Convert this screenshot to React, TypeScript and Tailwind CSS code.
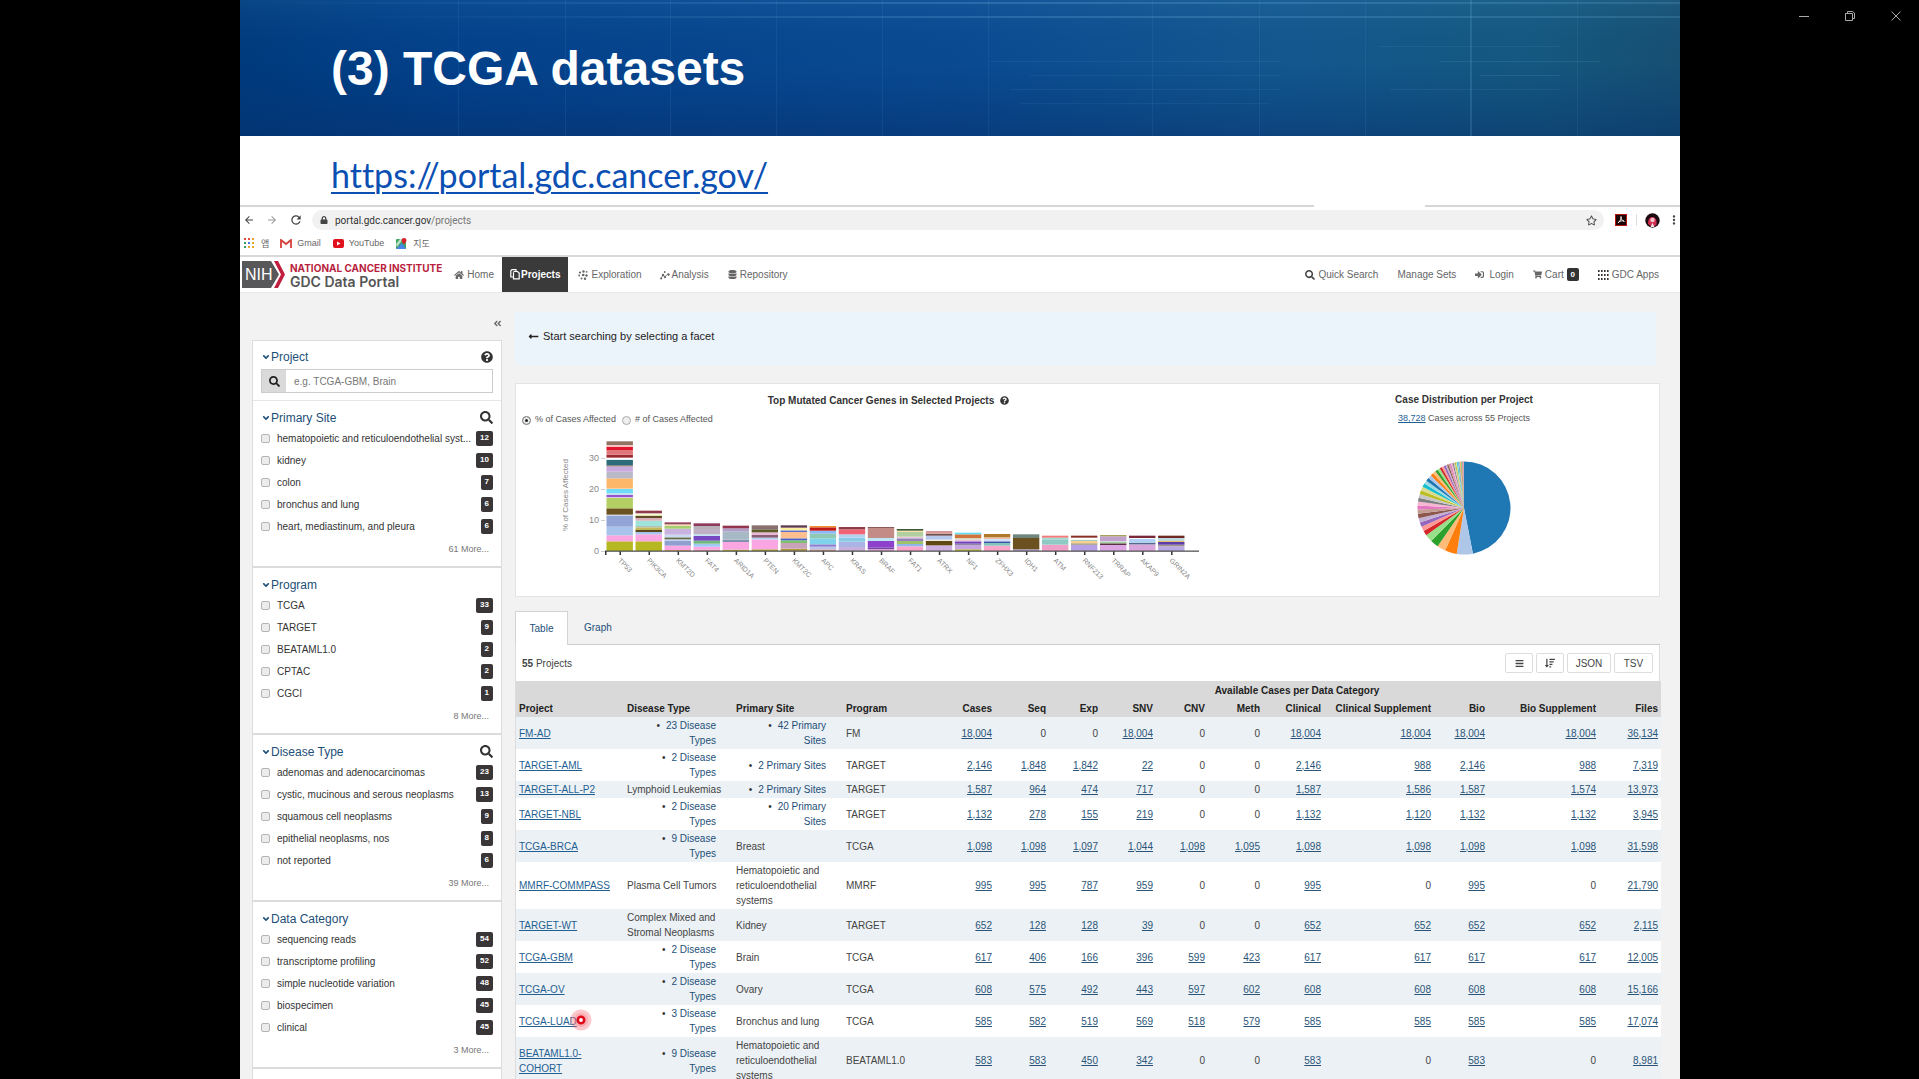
import React, { useState } from "react";
import {
  FaAngleDoubleLeft,
  FaAngleDown,
  FaBars,
  FaDatabase,
  FaHome,
  FaLock,
  FaQuestionCircle,
  FaSearch,
  FaShoppingCart,
  FaSignInAlt,
  FaSortAmountDown,
  FaLongArrowAltLeft,
  FaRegStar,
} from "react-icons/fa";
import { MdArrowBack, MdArrowForward, MdRefresh, MdMoreVert } from "react-icons/md";
import clsx from "clsx";

type FacetItem = [name: string, count: number];

interface Facet {
  title: string;
  searchable: boolean;
  items: FacetItem[];
  more: number;
}

interface ProjectRow {
  id: string;
  disease: string | number;
  site: string | number;
  program: string;
  // cases, seq, exp, snv, cnv, meth, clinical, clinical supp, bio, bio supp, files
  counts: number[];
}

const FACETS: Facet[] = [
  {
    title: "Primary Site",
    searchable: true,
    items: [
      ["hematopoietic and reticuloendothelial syst...", 12],
      ["kidney", 10],
      ["colon", 7],
      ["bronchus and lung", 6],
      ["heart, mediastinum, and pleura", 6],
    ],
    more: 61,
  },
  {
    title: "Program",
    searchable: false,
    items: [["TCGA", 33], ["TARGET", 9], ["BEATAML1.0", 2], ["CPTAC", 2], ["CGCI", 1]],
    more: 8,
  },
  {
    title: "Disease Type",
    searchable: true,
    items: [
      ["adenomas and adenocarcinomas", 23],
      ["cystic, mucinous and serous neoplasms", 13],
      ["squamous cell neoplasms", 9],
      ["epithelial neoplasms, nos", 8],
      ["not reported", 6],
    ],
    more: 39,
  },
  {
    title: "Data Category",
    searchable: false,
    items: [
      ["sequencing reads", 54],
      ["transcriptome profiling", 52],
      ["simple nucleotide variation", 48],
      ["biospecimen", 45],
      ["clinical", 45],
    ],
    more: 3,
  },
];

const HEMATO = "Hematopoietic and reticuloendothelial systems";

const PROJECTS: ProjectRow[] = [
  { id: "FM-AD", disease: 23, site: 42, program: "FM", counts: [18004, 0, 0, 18004, 0, 0, 18004, 18004, 18004, 18004, 36134] },
  { id: "TARGET-AML", disease: 2, site: 2, program: "TARGET", counts: [2146, 1848, 1842, 22, 0, 0, 2146, 988, 2146, 988, 7319] },
  { id: "TARGET-ALL-P2", disease: "Lymphoid Leukemias", site: 2, program: "TARGET", counts: [1587, 964, 474, 717, 0, 0, 1587, 1586, 1587, 1574, 13973] },
  { id: "TARGET-NBL", disease: 2, site: 20, program: "TARGET", counts: [1132, 278, 155, 219, 0, 0, 1132, 1120, 1132, 1132, 3945] },
  { id: "TCGA-BRCA", disease: 9, site: "Breast", program: "TCGA", counts: [1098, 1098, 1097, 1044, 1098, 1095, 1098, 1098, 1098, 1098, 31598] },
  { id: "MMRF-COMMPASS", disease: "Plasma Cell Tumors", site: HEMATO, program: "MMRF", counts: [995, 995, 787, 959, 0, 0, 995, 0, 995, 0, 21790] },
  { id: "TARGET-WT", disease: "Complex Mixed and Stromal Neoplasms", site: "Kidney", program: "TARGET", counts: [652, 128, 128, 39, 0, 0, 652, 652, 652, 652, 2115] },
  { id: "TCGA-GBM", disease: 2, site: "Brain", program: "TCGA", counts: [617, 406, 166, 396, 599, 423, 617, 617, 617, 617, 12005] },
  { id: "TCGA-OV", disease: 2, site: "Ovary", program: "TCGA", counts: [608, 575, 492, 443, 597, 602, 608, 608, 608, 608, 15166] },
  { id: "TCGA-LUAD", disease: 3, site: "Bronchus and lung", program: "TCGA", counts: [585, 582, 519, 569, 518, 579, 585, 585, 585, 585, 17074] },
  { id: "BEATAML1.0-COHORT", disease: 9, site: HEMATO, program: "BEATAML1.0", counts: [583, 583, 450, 342, 0, 0, 583, 0, 583, 0, 8981] },
];

// Stacks are listed bottom to top, "colour height" in units of a third of a pixel
const GENES: { name: string; stack: string }[] = [
  { name: "TP53", stack: "b5b821 29,f9a6e2 18,a9c4ec 26,93a5d6 34,ffffff 2,6b5020 19,b3cf63 31,ffffff 2,9455cc 8,c9e8fa 4,6fdcf5 13,ffffff 1,fdb76a 31,b9b9c8 20,c9aade 16,8a6a50 3,2d6d7b 17,ffffff 6,9c2a30 9,e0767c 14,e1142b 9,f9c0c0 6,8f7462 11" },
  { name: "PIK3CA", stack: "b5b821 29,f9a6e2 21,a9c4ec 7,5a4720 6,c2b95a 8,b0c3b8 4,9fe3da 16,d9b0b8 8,5f4a2a 7,e8f3a0 4,ffffff 3,8f3a48 8" },
  { name: "KMT2D", stack: "e8a26a 3,f9a6e2 13,8f9fd0 15,b5cfee 4,6b6a48 6,c9daf5 8,c8b2e0 18,a5cf70 8,f3dcb0 5,93455c 6" },
  { name: "FAT4", stack: "e58f9a 4,f9a6e2 9,9fc9f5 9,6fb97a 9,7648c0 14,bfe6f5 5,c0b0c4 16,b7b0b8 9,8f3a5c 8" },
  { name: "ARID1A", stack: "b5b821 4,f9a6e2 23,7f93b0 7,a8b9c6 24,b0a0c8 10,93354c 8" },
  { name: "PTEN", stack: "a5a821 5,f9a6e2 30,a9d4f5 5,8a6078 8,eab8d4 8,5c5c28 9,8a7070 12" },
  { name: "KMT2C", stack: "b59a41 7,c8a2b8 17,7fc06a 8,4560c8 6,fbbf90 19,5a70d0 5,fcf0a0 7,ffffff 1,5e3a4c 7" },
  { name: "APC", stack: "d79a91 5,b9c4ec 8,8f7ccf 7,7fd3ea 18,8fc9b4 14,8cb8f5 9,c01818 10,f0902f 4" },
  { name: "KRAS", stack: "c8b0dc 12,a9b4e4 16,88cbe4 12,b4d2f0 10,f06474 15,8e3c48 7" },
  { name: "BRAF", stack: "e2a0d8 6,6a4a9c 4,8c40cc 20,bce8f5 9,c48c86 30,8d5a58 3" },
  { name: "FAT1", stack: "fba6ca 14,93b4ec 7,a0c36a 9,9480bc 8,e8c8d8 5,b2cfa2 14,f8e3a0 4,3f5a3a 5" },
  { name: "ATRX", stack: "cfb0e2 17,5f4812 14,ffffff 3,b8c8ea 12,705050 6,d89a98 8" },
  { name: "NF1", stack: "b5b821 5,c7a5e0 13,8f8ca0 4,7040b8 7,e5c8dc 6,d9d5b8 4,d0743c 11,60e0f5 5" },
  { name: "ZFHX3", stack: "fba6ca 16,80c4bc 8,3f50a8 5,cfe0fa 7,f3c0a8 5,b07a2c 10" },
  { name: "IDH1", stack: "b9a0e0 5,6b5020 34,70857c 11" },
  { name: "ATM", stack: "f0a0c8 19,8fc9c4 16,a0d8d4 5,f07c78 6" },
  { name: "RNF213", stack: "b8a0e4 19,8f8f70 4,fbcf90 7,9fd0c8 4,ffffff 6,8a2f28 6" },
  { name: "TRRAP", stack: "dba6e2 18,5a3048 5,a2d09a 5,ffffff 1,c0a0cc 15,a8a05c 4" },
  { name: "AKAP9", stack: "d8a6dc 20,506c88 5,b0d0f5 12,ffffff 2,782838 7" },
  { name: "GRIN2A", stack: "b8a8e4 14,a09088 5,5c3cac 8,e8c060 3,bcd8e0 9,702820 7" },
];

const PIE_VALUES = [
  18004, 2146, 1587, 1132, 1098, 995, 652, 617, 608, 585, 583, 560, 537, 528, 516, 507, 504, 500,
  489, 470, 461, 443, 412, 383, 377, 323, 307, 291, 261, 200, 200, 185, 185, 179, 172, 150, 143,
  124, 113, 101, 92, 87, 80, 75, 70, 58, 57, 51, 45, 36, 30, 24, 15, 13, 7,
];

const CATEGORY20 = [
  "#1f77b4", "#aec7e8", "#ff7f0e", "#ffbb78", "#2ca02c", "#98df8a", "#d62728", "#ff9896", "#9467bd", "#c5b0d5",
  "#8c564b", "#c49c94", "#e377c2", "#f7b6d2", "#7f7f7f", "#c7c7c7", "#bcbd22", "#dbdb8d", "#17becf", "#9edae5",
];

const COLUMN_WIDTHS = [
  "w-[108px]", "w-[109px]", "w-[110px]", "w-[112px]", "w-[40px]", "w-[54px]", "w-[52px]", "w-[55px]",
  "w-[52px]", "w-[55px]", "w-[61px]", "w-[110px]", "w-[54px]", "w-[111px]", "w-[62px]",
];

const COUNT_HEADERS = ["Cases", "Seq", "Exp", "SNV", "CNV", "Meth", "Clinical", "Clinical Supplement", "Bio", "Bio Supplement", "Files"];

/* ---------- Slide banner ---------- */

const SlideBanner = () => (
  <header className="relative flex h-[136px] shrink-0 items-center overflow-hidden bg-[#03418c] pt-[2px] pl-[91px]">
    <svg className="absolute inset-0 h-full w-full" viewBox="0 0 1440 136" preserveAspectRatio="none" aria-hidden="true">
      <defs>
        <linearGradient id="banner" x1="0" x2="1" y1="0" y2="0">
          <stop offset="0" stopColor="#003b7d" />
          <stop offset="0.15" stopColor="#03418b" />
          <stop offset="0.5" stopColor="#0a4a91" />
          <stop offset="0.72" stopColor="#13578f" />
          <stop offset="0.9" stopColor="#15587f" />
          <stop offset="1" stopColor="#164f72" />
        </linearGradient>
        <linearGradient id="shade" x1="0" x2="0" y1="0" y2="1">
          <stop offset="0" stopColor="#5fb0dd" stopOpacity="0.1" />
          <stop offset="0.45" stopColor="#003070" stopOpacity="0" />
          <stop offset="1" stopColor="#052c66" stopOpacity="0.45" />
        </linearGradient>
        <linearGradient id="fade" x1="0" x2="1" y1="0" y2="0">
          <stop offset="0" stopColor="#6fb4e0" stopOpacity="0" />
          <stop offset="0.5" stopColor="#6fb4e0" stopOpacity="0.25" />
          <stop offset="1" stopColor="#6fb4e0" stopOpacity="0.2" />
        </linearGradient>
      </defs>
      <rect width="1440" height="136" fill="url(#banner)" />
      <rect width="1440" height="136" fill="url(#shade)" />
      <rect y="2" width="1440" height="2" fill="url(#fade)" />
      <rect x="100" y="16" width="1340" height="2" fill="url(#fade)" />
      <g fill="#6fb4e0">
        {[218, 325, 430, 536, 642, 748, 912, 1019, 1125, 1337].map((x) => (
          <rect key={x} x={x} width="1" height="136" opacity="0.1" />
        ))}
        <rect x="1230" width="2" height="136" opacity="0.2" />
        <rect x="750" y="61" width="290" height="1" opacity="0.1" />
        <rect x="790" y="75" width="250" height="1" opacity="0.08" />
        <rect x="770" y="89" width="270" height="1" opacity="0.1" />
        <rect x="780" y="103" width="250" height="1" opacity="0.08" />
        <rect x="1140" y="46" width="180" height="1" opacity="0.12" />
        <rect x="1200" y="61" width="160" height="1" opacity="0.14" />
        <rect x="1240" y="75" width="80" height="1" opacity="0.16" />
        <rect x="1150" y="89" width="170" height="1" opacity="0.12" />
      </g>
    </svg>
    <h1 className="relative text-5xl font-bold text-white">(3) TCGA datasets</h1>
  </header>
);

/* ---------- Browser chrome ---------- */

const BrowserBar = () => (
  <div className="shrink-0 bg-white text-[#444]">
    <div className="flex h-[2px]">
      <div className="flex-1 bg-[#d6d6d6]" />
      <div className="w-[111px]" />
      <div className="w-[255px] bg-[#d6d6d6]" />
    </div>
    <div className="flex h-[26px] items-center pl-[3px]">
      <button aria-label="Back"><MdArrowBack className="h-3 w-3" /></button>
      <button aria-label="Forward" className="ml-[11px] text-[#999]"><MdArrowForward className="h-3 w-3" /></button>
      <button aria-label="Reload" className="ml-[11px]"><MdRefresh className="h-[14px] w-[14px]" /></button>
      <div className="ml-[9px] flex h-5 flex-1 items-center rounded-full bg-[#f1f1f1] pr-[7px] pl-[8px]">
        <FaLock className="h-[8px] w-[8px]" />
        <span className="ml-[7px] font-[Roboto,sans-serif] text-[10px] text-[#333]">
          portal.gdc.cancer.gov<span className="text-[#777]">/projects</span>
        </span>
        <FaRegStar className="ml-auto h-[11px] w-[11px]" />
      </div>
      <svg className="ml-[11px] h-3 w-3" viewBox="0 0 12 12" aria-hidden="true">
        <rect x="0.5" y="0.5" width="11" height="11" fill="#1c0505" stroke="#b51212" />
        <path d="M6 2.500c.6 2-1 5-3 6.500M6 2.500c-.5 2 1 4 3.500 5M3.500 8c2-1.200 3.500-1.400 5.500-1" fill="none" stroke="#fff" strokeWidth="0.9" />
      </svg>
      <div className="ml-[9px] h-3 w-px bg-[#ddd]" />
      <svg className="ml-[8px] h-[15px] w-[15px]" viewBox="0 0 15 15" aria-hidden="true">
        <circle cx="7.500" cy="7.500" r="7.200" fill="#1c0a12" />
        <path d="M3 11c0-5 1.500-7 4.500-7s4.500 3 4 8l-4 2z" fill="#d02f52" />
        <circle cx="7.500" cy="7" r="2.200" fill="#f6c3cc" />
        <path d="M5.500 14l2-4 2 4z" fill="#f4e4ea" />
      </svg>
      <button aria-label="Menu" className="ml-[8px] flex w-3 justify-center"><MdMoreVert className="h-[14px] w-[14px] shrink-0" /></button>
    </div>
    <nav className="flex h-[22px] items-center pb-[2px] pl-1 text-[9px] leading-none text-[#666]">
      <svg className="h-[10px] w-[10px]" viewBox="0 0 10 10" aria-hidden="true">
        {["#e04b3c", "#e04b3c", "#e9a82c", "#3b9d5a", "#3f7be0", "#e9a82c", "#3b9d5a", "#e9a82c", "#e9a82c"].map((c, i) => (
          <rect key={i} x={(i % 3) * 4} y={Math.floor(i / 3) * 4} width="2" height="2" fill={c} />
        ))}
      </svg>
      <a href="#apps" className="ml-[7px] font-['Noto_Sans_CJK_KR',sans-serif]">앱</a>
      <a href="#gmail" className="ml-[11px] flex items-center gap-[5px]">
        <svg className="h-[9px] w-3" viewBox="0 0 12 9" aria-hidden="true">
          <path d="M1 9V1l5 4 5-4v8" fill="none" stroke="#d6403a" strokeWidth="1.800" />
        </svg>
        Gmail
      </a>
      <a href="#youtube" className="ml-[12px] flex items-center gap-[5px]">
        <svg className="h-[9px] w-[11px]" viewBox="0 0 11 9" aria-hidden="true">
          <rect width="11" height="9" rx="2" fill="#e0101c" />
          <path d="M4 2.500v4l3.500-2z" fill="#fff" />
        </svg>
        YouTube
      </a>
      <a href="#maps" className="ml-[12px] flex items-center gap-[6px] font-['Noto_Sans_CJK_KR',sans-serif]">
        <svg className="h-[11px] w-[11px]" viewBox="0 0 11 11" aria-hidden="true">
          <rect y="1" width="10" height="10" rx="1" fill="#3aa35c" />
          <path d="M0 11l6-6 4 6z" fill="#4a86e8" />
          <path d="M0 6l4-5h3L1 9z" fill="#bfe0c8" />
          <path d="M8 6.500C6 4 5.500 3.500 5.500 2.300a2.500 2.300 0 0 1 5 0C10.500 3.500 10 4 8 6.500z" fill="#d8232f" />
        </svg>
        지도
      </a>
    </nav>
  </div>
);

/* ---------- Portal header ---------- */

const NihLogo = () => (
  <svg className="h-[27px] w-[43px]" viewBox="0 0 43 27" role="img" aria-label="NIH">
    <path d="M0 0h29l8 13.500-8 13.500H0z" fill="#58585b" />
    <path d="M32 0h4l7 13.500-7 13.500h-4l7-13.500z" fill="#c01f3f" />
    <text x="3" y="19" fontSize="16" fill="#fff" fontFamily="Liberation Sans, sans-serif">NIH</text>
  </svg>
);

const ProjectsIcon = () => (
  <svg className="h-[11px] w-[10px]" viewBox="0 0 10 11" aria-hidden="true" fill="none" stroke="currentColor" strokeWidth="1.200">
    <path d="M3.500 3.200V9.800h5.700V4L7.500 2.500H3.500" />
    <path d="M3.500 8H.8V1.700L2 .7h4v1.600" />
  </svg>
);

const ExplorationIcon = () => (
  <svg className="h-[10px] w-[10px]" viewBox="0 0 10 10" aria-hidden="true" fill="currentColor">
    <circle cx="2" cy="2.500" r="1.100" />
    <circle cx="5.500" cy="1.500" r="1.200" />
    <circle cx="8.700" cy="1.800" r="0.900" />
    <circle cx="1.200" cy="5.500" r="0.900" />
    <circle cx="5.200" cy="5" r="1.300" />
    <circle cx="8.500" cy="5.500" r="1.200" />
    <circle cx="3.500" cy="8.500" r="1" />
    <circle cx="7" cy="8.700" r="1.200" />
  </svg>
);

const AnalysisIcon = () => (
  <svg className="h-[10px] w-[10px]" viewBox="0 0 10 10" aria-hidden="true" fill="currentColor">
    <path d="M.5 8.500L3 5.500l2 1 3-2.500" fill="none" stroke="currentColor" strokeWidth="0.800" />
    <circle cx="3" cy="5" r="1.200" />
    <circle cx="5" cy="7.200" r="1.100" />
    <circle cx="8.500" cy="4.500" r="1.200" />
    <circle cx="4.700" cy="2" r="0.900" />
    <circle cx="1.200" cy="8.500" r="1" />
  </svg>
);

const PortalHeader = () => (
  <header className="flex h-[38px] shrink-0 items-center border-t-2 border-b border-t-[#d9d9d9] border-b-[#e7e7e7] bg-white pl-[2px] text-[10px] text-[#666]">
    <NihLogo />
    <div className="ml-[5px] font-[Inter,sans-serif] leading-[13px]">
      <div className="text-[10px] font-bold text-[#b81f3e]">NATIONAL CANCER INSTITUTE</div>
      <div className="text-sm leading-[13px] font-semibold text-[#555]">GDC Data Portal</div>
    </div>
    <nav className="ml-3 flex items-center self-stretch">
      <a href="#home" className="flex items-center gap-[3px] pr-[8px]"><FaHome className="h-[10px] w-[10px]" />Home</a>
      <a href="#projects" className="flex h-full items-center gap-px bg-[#3a3a3a] px-[8px] font-bold text-white"><ProjectsIcon />Projects</a>
      <a href="#exploration" className="ml-[10px] flex items-center gap-[3px]"><ExplorationIcon />Exploration</a>
      <a href="#analysis" className="ml-[18px] flex items-center gap-[2px]"><AnalysisIcon />Analysis</a>
      <a href="#repository" className="ml-[19px] flex items-center gap-[3px]"><FaDatabase className="h-[9px] w-[9px]" />Repository</a>
    </nav>
    <nav className="ml-auto flex items-center gap-[19px] pr-[21px]">
      <button className="flex items-center gap-[3px]"><FaSearch className="h-[10px] w-[10px] text-[#444]" />Quick Search</button>
      <a href="#sets">Manage Sets</a>
      <button className="flex items-center gap-[5px]"><FaSignInAlt className="h-[9px] w-[9px]" />Login</button>
      <a href="#cart" className="flex items-center gap-[3px]">
        <FaShoppingCart className="h-[9px] w-[9px]" />
        Cart
        <span className="flex h-[13px] w-3 items-center justify-center rounded-xs bg-[#333] text-[8px] font-bold text-white">0</span>
      </a>
      <button className="flex items-center gap-[3px]">
        <svg className="h-[10px] w-[11px]" viewBox="0 0 11 10" aria-hidden="true" fill="#333">
          {[0, 1, 2].map((r) => [0, 1, 2, 3].map((c) => <rect key={`${r}${c}`} x={c * 3} y={r * 4} width="1.600" height="2" />))}
        </svg>
        GDC Apps
      </button>
    </nav>
  </header>
);

/* ---------- Facet sidebar ---------- */

const FacetTitle = ({ title }: { title: string }) => (
  <h2 className="flex items-center text-xs text-[#1d4f78]">
    <FaAngleDown className="h-[10px] w-[10px]" />
    {title}
  </h2>
);

const FacetSection = ({ facet }: { facet: Facet }) => (
  <section className="h-[167px] border-b-2 border-[#dcdcdc] pt-[7px] pr-[8px] pl-[8px]">
    <div className="flex h-[19px] items-center justify-between">
      <FacetTitle title={facet.title} />
      {facet.searchable && (
        <button aria-label={`Search ${facet.title}`}><FaSearch className="h-[13px] w-[13px] text-[#333]" /></button>
      )}
    </div>
    <ul>
      {facet.items.map(([name, count]) => (
        <li key={name} className="flex h-[22px] items-center justify-between">
          <label className="flex items-center gap-[7px] text-[10px] whitespace-nowrap text-[#333]">
            <input type="checkbox" className="h-[9px] w-[9px] shrink-0 appearance-none rounded-xs border border-[#b5b5b5] bg-[#ececec]" />
            {name}
          </label>
          <span className="flex h-[15px] items-center justify-center rounded-xs bg-[#3a3536] px-1 text-[8px] leading-none font-bold text-white">
            {count}
          </span>
        </li>
      ))}
    </ul>
    <div className="flex h-[26px] items-center justify-end pr-1">
      <button className="text-[9px] text-[#777]">{facet.more} More...</button>
    </div>
  </section>
);

const Sidebar = () => (
  <aside className="w-[262px] shrink-0 pl-3">
    <div className="flex h-[47px] items-end justify-end pb-[12px]">
      <button aria-label="Collapse facets"><FaAngleDoubleLeft className="h-[9px] w-[9px] text-[#666]" /></button>
    </div>
    <div className="border border-[#dcdcdc] bg-white">
      <section className="h-[60px] border-b border-[#e6e6e6] px-2 pt-[6px]">
        <div className="flex h-5 items-center justify-between">
          <FacetTitle title="Project" />
          <FaQuestionCircle className="h-3 w-3 text-[#333]" />
        </div>
        <div className="mt-[2px] flex h-6 border border-[#ccc]">
          <span className="flex w-6 items-center justify-center bg-[#dadada]"><FaSearch className="h-[11px] w-[11px] text-[#222]" /></span>
          <input
            type="text"
            aria-label="Project"
            placeholder="e.g. TCGA-GBM, Brain"
            className="min-w-0 flex-1 px-2 text-[10px] placeholder:text-[#777]"
          />
        </div>
      </section>
      {FACETS.map((facet) => (
        <FacetSection key={facet.title} facet={facet} />
      ))}
      <div className="h-10" />
    </div>
  </aside>
);

/* ---------- Charts ---------- */

const GeneChart = () => {
  const baseline = 119;
  return (
    <svg className="h-[160px] w-[700px]" viewBox="0 0 700 160" role="img" aria-label="Top mutated cancer genes" fontFamily="Liberation Sans, sans-serif">
      <text x="50" y="63" fontSize="8" fill="#888" textAnchor="middle" dominantBaseline="middle" transform="rotate(-90 50 63)">
        % of Cases Affected
      </text>
      {[0, 10, 20, 30].map((t) => (
        <g key={t}>
          <text x="83" y={baseline - t * 3.1 + 3} fontSize="9" fill="#888" textAnchor="end">{t}</text>
          <rect x="85" y={Math.round(baseline - t * 3.1)} width="4" height="1" fill="#ccc" />
        </g>
      ))}
      {GENES.map((gene, i) => {
        const x = 90.5 + i * 29.03;
        let y = baseline;
        return (
          <g key={gene.name}>
            {gene.stack.split(",").map((part, j) => {
              const [color, size] = part.split(" ");
              const h = Number(size) / 3;
              y -= h;
              return <rect key={j} x={x} y={y} width="26.400" height={h} fill={`#${color}`} />;
            })}
            <rect x={x + 13} y={baseline} width="1.500" height="4" fill="#333" />
            <text fontSize="7" fill="#888" transform={`translate(${x + 11} 129) rotate(45)`}>{gene.name}</text>
          </g>
        );
      })}
      <rect x="89" y={baseline - 0.5} width="594" height="1.300" fill="#555" />
      <rect x="89" y={baseline} width="1.500" height="4" fill="#333" />
    </svg>
  );
};

const CasePie = () => {
  const total = PIE_VALUES.reduce((a, b) => a + b, 0);
  let start = 0;
  return (
    <svg className="h-[94px] w-[94px]" viewBox="-47 -47 94 94" role="img" aria-label="Case distribution per project">
      {PIE_VALUES.map((value, i) => {
        const a0 = start;
        start += (value / total) * Math.PI * 2;
        const x0 = Math.sin(a0) * 46.5;
        const y0 = -Math.cos(a0) * 46.5;
        const x1 = Math.sin(start) * 46.5;
        const y1 = -Math.cos(start) * 46.5;
        return <path key={i} d={`M0 0L${x0} ${y0}A46.5 46.5 0 0 1 ${x1} ${y1}Z`} fill={CATEGORY20[i % 20]} />;
      })}
    </svg>
  );
};

const ChartsPanel = () => {
  const [mode, setMode] = useState("percent");
  const options = [
    { value: "percent", label: "% of Cases Affected" },
    { value: "count", label: "# of Cases Affected" },
  ];

  return (
    <section className="mt-[18px] flex h-[214px] border border-[#e4e4e4] bg-white text-[#333]">
      <div className="min-w-0 flex-1">
        <h3 className="flex h-8 items-center justify-center gap-[6px] pr-2 text-[10px] font-bold">
          Top Mutated Cancer Genes in Selected Projects
          <FaQuestionCircle className="h-[9px] w-[9px]" />
        </h3>
        <div className="flex h-4 gap-[6px] pl-[6px]">
          {options.map((o) => (
            <label key={o.value} className="flex h-2 items-center gap-1 text-[9px] text-[#555]">
              <input
                type="radio"
                name="mode"
                checked={mode === o.value}
                onChange={() => setMode(o.value)}
                className="h-[9px] w-[9px] appearance-none rounded-full border border-[#aaa] bg-[#eee] checked:border-[#999] checked:bg-[#222] checked:shadow-[inset_0_0_0_2px_#eee]"
              />
              {o.label}
            </label>
          ))}
        </div>
        <GeneChart />
      </div>
      <div className="flex w-[390px] flex-col items-center">
        <h3 className="flex h-[30px] items-center text-[10px] font-bold">Case Distribution per Project</h3>
        <p className="text-[9px] leading-none text-[#555]">
          <a href="#cases" className="text-[#1f5f92] underline">38,728</a> Cases across 55 Projects
        </p>
        <div className="mt-[38px]"><CasePie /></div>
      </div>
    </section>
  );
};

/* ---------- Projects table ---------- */

const SummaryCell = ({ value, plural }: { value: string | number; plural: string }) => {
  if (typeof value === "string") {
    return <td className="px-[3px] py-px">{value}</td>;
  }
  return (
    <td className="py-px pr-[17px] pl-3 text-right">
      <ul>
        <li className="text-[#1d4f78]">
          <span className="mr-[6px] text-[#333]">•</span>
          {value} {plural}
        </li>
      </ul>
    </td>
  );
};

// Laser pointer dot
const Pointer = () => (
  <svg className="absolute -top-2 -right-4 h-6 w-6" viewBox="0 0 24 24" aria-hidden="true">
    <circle cx="12" cy="12" r="10.500" fill="#f3606a" opacity="0.35" />
    <circle cx="12" cy="12" r="7" fill="#f3606a" opacity="0.25" />
    <circle cx="12" cy="12" r="3.200" fill="#fff" stroke="#e00a18" strokeWidth="2.600" />
  </svg>
);

const ProjectsTable = () => (
  <table className="w-full table-fixed text-left text-[10px] leading-[15px] text-[#444]">
    <colgroup>
      {COLUMN_WIDTHS.map((w, i) => (
        <col key={i} className={w} />
      ))}
    </colgroup>
    <thead className="bg-[#d9d9d9] text-[#222]">
      <tr className="h-[18px]">
        <th colSpan={5} />
        <th colSpan={9} className="text-center">Available Cases per Data Category</th>
        <th />
      </tr>
      <tr className="h-[18px]">
        {["Project", "Disease Type", "Primary Site", "Program"].map((h) => (
          <th key={h} className="px-[3px]">{h}</th>
        ))}
        {COUNT_HEADERS.map((h) => (
          <th key={h} className="pr-[3px] text-right whitespace-nowrap">{h}</th>
        ))}
      </tr>
    </thead>
    <tbody>
      {PROJECTS.map((p, i) => (
        <tr key={p.id} className={clsx(i % 2 === 0 ? "bg-[#ecf1f5]" : "bg-white")}>
          <td className="px-[3px] py-px">
            <span className="relative">
              <a href={`#${p.id}`} className="text-[#1f5f92] underline">{p.id}</a>
              {p.id === "TCGA-LUAD" && <Pointer />}
            </span>
          </td>
          <SummaryCell value={p.disease} plural="Disease Types" />
          <SummaryCell value={p.site} plural="Primary Sites" />
          <td className="px-[3px] py-px">{p.program}</td>
          {p.counts.map((n, j) => (
            <td key={j} className="py-px pr-[3px] text-right">
              {n === 0 ? "0" : <a href={`#${p.id}`} className="text-[#2a5578] underline">{n.toLocaleString("en-US")}</a>}
            </td>
          ))}
        </tr>
      ))}
    </tbody>
  </table>
);

const TOOL_BUTTON = "flex h-5 items-center justify-center rounded-xs border border-[#ddd] bg-white";

const ProjectsPanel = () => (
  <section className="mt-[14px]">
    <div role="tablist" className="flex h-[34px] border-b border-[#ccc] text-[10px] text-[#1d4f78]">
      <button role="tab" aria-selected="true" className="-mb-px w-[53px] border border-b-0 border-[#d4d4d4] bg-white">Table</button>
      <button role="tab" aria-selected="false" className="px-4">Graph</button>
    </div>
    <div className="border-x border-[#dcdcdc] bg-white">
      <div className="flex h-9 items-center pr-[6px] pl-[6px] text-[10px] text-[#444]">
        <span><b>55</b> Projects</span>
        <div className="ml-auto flex gap-[3px]">
          <button aria-label="Columns" className={clsx(TOOL_BUTTON, "w-7")}><FaBars className="h-[9px] w-[9px]" /></button>
          <button aria-label="Sort" className={clsx(TOOL_BUTTON, "w-7")}><FaSortAmountDown className="h-[10px] w-[10px]" /></button>
          <button className={clsx(TOOL_BUTTON, "w-11")}>JSON</button>
          <button className={clsx(TOOL_BUTTON, "w-[39px]")}>TSV</button>
        </div>
      </div>
      <ProjectsTable />
    </div>
  </section>
);

/* ---------- Window ---------- */

const WindowControls = () => (
  <div className="flex h-8 w-[239px] shrink-0 justify-end text-[#aaa]">
    {[
      { label: "Minimize", d: "M0 5.500h10" },
      { label: "Restore", d: "M.5 2.500h7v7h-7zM2.500 2.500v-2h5l2 1.500v5.500h-2" },
      { label: "Close", d: "M.5.500l9 9M9.500.500l-9 9" },
    ].map((c) => (
      <button key={c.label} aria-label={c.label} className="flex w-[46px] items-center justify-center">
        <svg className="h-[10px] w-[10px]" viewBox="0 0 10 10" fill="none" stroke="currentColor">
          <path d={c.d} />
        </svg>
      </button>
    ))}
  </div>
);

export default function App() {
  return (
    <div className="flex h-screen overflow-hidden bg-black font-['Liberation_Sans','Noto_Sans_CJK_KR',sans-serif]">
      <div className="w-[240px] shrink-0" />
      <main className="flex min-w-0 flex-1 flex-col overflow-hidden bg-white">
        <SlideBanner />
        <div className="flex h-[69px] shrink-0 items-center pt-[8px] pl-[91px]">
          <a href="https://portal.gdc.cancer.gov/" className="font-[Lato,sans-serif] text-[34px] leading-none text-[#0b4fb3] underline decoration-2 underline-offset-4 [font-variant-ligatures:none]">
            https://portal.gdc.cancer.gov/
          </a>
        </div>
        <BrowserBar />
        <PortalHeader />
        <div className="flex min-h-0 flex-1 bg-[#f2f2f2]">
          <Sidebar />
          <div className="min-w-0 flex-1 pt-[19px] pr-5 pl-[13px]">
            <div className="mr-1 flex h-[53px] items-center gap-1 bg-[#ecf4fb] px-[13px] pb-1 text-[11px] text-[#222]">
              <FaLongArrowAltLeft className="h-[11px] w-[11px]" />
              Start searching by selecting a facet
            </div>
            <ChartsPanel />
            <ProjectsPanel />
          </div>
        </div>
      </main>
      <WindowControls />
    </div>
  );
}
